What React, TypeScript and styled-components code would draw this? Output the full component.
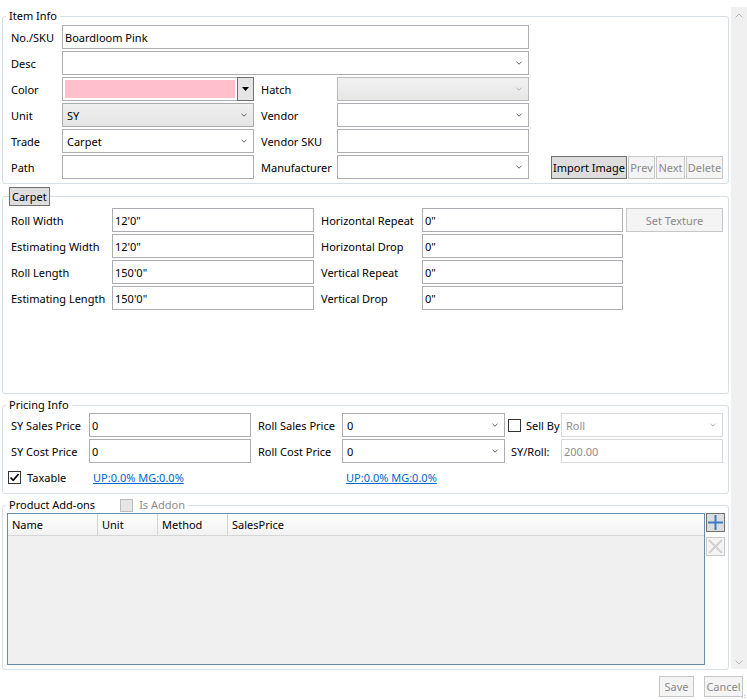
import React from 'react'
import styled, { createGlobalStyle, css } from 'styled-components'

const GlobalStyle = createGlobalStyle`
  * { box-sizing: border-box; }
  html, body { margin: 0; padding: 0; background: #fff; }
  body {
    font-family: "Noto Sans", "Liberation Sans", sans-serif;
    font-size: 11px;
    color: #000;
  }
`

const Window = styled.div`
  position: relative;
  width: 747px;
  height: 700px;
  display: flex;
  flex-direction: column;
  overflow: hidden;
`

const Body = styled.div`
  display: flex;
  height: 670px;
`

const Content = styled.div`
  width: 731px;
  padding: 0 2px;
  display: flex;
  flex-direction: column;
`

const ScrollTrack = styled.div`
  width: 16px;
  height: 662px;
  margin-top: 7px;
  padding: 6px 0 4px;
  background: #f0f0f0;
  display: flex;
  flex-direction: column;
  justify-content: space-between;
  align-items: center;
`

const GroupBox = styled.fieldset<{ $top: number; $pad: string }>`
  margin: ${p => p.$top}px 0 0;
  padding: ${p => p.$pad};
  min-width: 0;
  border: 1px solid #d5dfe5;
  border-radius: 3px;
`

const Legend = styled.legend<{ $offset: number; $pad?: string }>`
  display: flex;
  align-items: center;
  margin-left: ${p => p.$offset}px;
  padding: ${p => p.$pad ?? '0 3px'};
  line-height: 16px;
`

const TabHeader = styled.span`
  display: block;
  height: 19px;
  line-height: 17px;
  padding: 0 2px;
  border: 1px solid #707070;
  background: #dddddd;
`

const FormGrid = styled.div<{ $cols: string }>`
  display: grid;
  grid-template-columns: ${p => p.$cols};
  grid-auto-rows: 24px;
  row-gap: 2px;
`

const FieldLabel = styled.label<{ $indent?: number }>`
  display: flex;
  align-items: center;
  padding-left: ${p => p.$indent ?? 0}px;
  white-space: nowrap;
`

const TextField = styled.input<{ $span?: number; $disabled?: boolean }>`
  grid-column: span ${p => p.$span ?? 1};
  width: 100%;
  height: 24px;
  margin: 0;
  padding: 0 2px;
  font: inherit;
  color: #000;
  background: #fff;
  border: 1px solid #abadb3;
  outline: none;
  ${p =>
    p.$disabled &&
    css`
      color: #8d8d8d;
      border-color: #d9d9d9;
    `}
`

type ComboVariant = 'white' | 'grey' | 'greyDisabled' | 'disabled'

const ComboBox = styled.div<{ $variant?: ComboVariant; $span?: number }>`
  grid-column: span ${p => p.$span ?? 1};
  height: 24px;
  display: flex;
  align-items: center;
  justify-content: space-between;
  padding: 0 6px 0 4px;
  border: 1px solid #abadb3;
  background: #fff;
  color: #000;
  ${p =>
    p.$variant === 'grey' &&
    css`
      border-color: #acacac;
      background: linear-gradient(#f0f0f0, #e5e5e5);
    `}
  ${p =>
    p.$variant === 'greyDisabled' &&
    css`
      border-color: #b9b9b9;
      background: linear-gradient(#f2f2f2, #e6e6e6);
      color: #8d8d8d;
    `}
  ${p =>
    p.$variant === 'disabled' &&
    css`
      border-color: #d9d9d9;
      color: #8d8d8d;
    `}
`

const ChevronMark = styled.svg<{ $light?: boolean }>`
  width: 6px;
  height: 4px;
  flex: none;
  stroke: ${p => (p.$light ? '#b0b0b0' : '#606060')};
`

const Chevron = ({ light }: { light?: boolean }) => (
  <ChevronMark $light={light} viewBox="0 0 6 4" fill="none" strokeWidth="1">
    <path d="M0.5 0.8 L3 3.2 L5.5 0.8" />
  </ChevronMark>
)

const ScrollArrow = styled.svg`
  width: 8px;
  height: 5px;
  stroke: #b4b4b4;
`

const ColorPicker = styled.div`
  display: flex;
  height: 24px;
`

const Swatch = styled.div<{ $color: string }>`
  flex: 1;
  padding: 2px;
  border: 1px solid #abadb3;
  border-right: none;
  &::before {
    content: '';
    display: block;
    height: 100%;
    background: ${p => p.$color};
  }
`

const DropButton = styled.div`
  width: 17px;
  border: 1px solid #707070;
  background: #e5e5e5;
  display: flex;
  align-items: center;
  justify-content: center;
`

const ButtonBar = styled.div`
  display: flex;
  justify-content: flex-end;
  align-items: flex-end;
  gap: 1px;
`

const Button = styled.button<{ $w: number; $h?: number; $active?: boolean }>`
  width: ${p => p.$w}px;
  height: ${p => p.$h ?? 23}px;
  margin: 0;
  padding: 0;
  font: inherit;
  white-space: nowrap;
  border: 1px solid #c7c7c7;
  background: #f4f4f4;
  color: #8a8a8a;
  ${p =>
    p.$active &&
    css`
      border-color: #707070;
      background: #dddddd;
      color: #000;
    `}
`

const CellEnd = styled.div`
  display: flex;
  justify-content: flex-end;
`

const CheckLabel = styled.label<{ $shift?: number; $gap: number; $muted?: boolean }>`
  display: flex;
  align-items: center;
  gap: ${p => p.$gap}px;
  margin-left: ${p => p.$shift ?? 0}px;
  white-space: nowrap;
  color: ${p => (p.$muted ? '#8d8d8d' : '#000')};
`

const CheckBox = styled.span<{ $disabled?: boolean }>`
  width: 13px;
  height: 13px;
  flex: none;
  display: flex;
  align-items: center;
  justify-content: center;
  border: 1px solid ${p => (p.$disabled ? '#bcbcbc' : '#333333')};
  background: ${p => (p.$disabled ? '#e6e6e6' : '#fff')};
`

const LinkCell = styled.div<{ $indent: number }>`
  display: flex;
  align-items: center;
  padding-left: ${p => p.$indent}px;
`

const Link = styled.a`
  color: #0066cc;
  text-decoration: underline;
  cursor: pointer;
`

const AddonsBody = styled.div`
  display: flex;
  gap: 1px;
  height: 152px;
`

const DataGrid = styled.div`
  flex: 1;
  display: flex;
  flex-direction: column;
  border: 1px solid #688caf;
  background: #f0f0f0;
`

const HeaderRow = styled.div`
  display: flex;
  height: 22px;
  background: linear-gradient(#ffffff, #f2f2f2);
  border-bottom: 1px solid #d5d5d5;
`

const HeaderCell = styled.div<{ $w?: number }>`
  display: flex;
  align-items: center;
  padding-left: 4px;
  ${p =>
    p.$w
      ? css`
          width: ${p.$w}px;
          border-right: 1px solid #d5d5d5;
        `
      : css`
          flex: 1;
        `}
`

const SideButtons = styled.div`
  display: flex;
  flex-direction: column;
  gap: 5px;
`

const IconButton = styled.button<{ $active?: boolean }>`
  width: 19px;
  height: 19px;
  margin: 0;
  padding: 0;
  display: flex;
  align-items: center;
  justify-content: center;
  border: 1px solid ${p => (p.$active ? '#707070' : '#c7c7c7')};
  background: ${p => (p.$active ? '#dddddd' : '#f4f4f4')};
`

const Footer = styled.div`
  display: flex;
  justify-content: flex-end;
  align-items: flex-start;
  gap: 10px;
  height: 30px;
  padding: 6px 4px 0 0;
`

const Grip = styled.svg`
  position: absolute;
  right: 1px;
  bottom: 1px;
  width: 4px;
  height: 4px;
  fill: #b8b8b8;
`

const CheckMark = () => (
  <svg width="11" height="11" viewBox="0 0 11 11" fill="none" stroke="#000" strokeWidth="1.7">
    <path d="M1.5 5.5 L4.2 8.3 L9.6 2" />
  </svg>
)

export default function App() {
  return (
    <Window>
      <GlobalStyle />
      <Body>
        <Content>
          <GroupBox $top={8} $pad="1px 5px 4px 8px">
            <Legend $offset={-5}>Item Info</Legend>
            <FormGrid $cols="51px 192px 83px 192px 1fr">
              <FieldLabel>No./SKU</FieldLabel>
              <TextField $span={3} defaultValue="Boardloom Pink" />
              <span />

              <FieldLabel>Desc</FieldLabel>
              <ComboBox $span={3}>
                <span />
                <Chevron />
              </ComboBox>
              <span />

              <FieldLabel>Color</FieldLabel>
              <ColorPicker>
                <Swatch $color="#ffc0cb" />
                <DropButton>
                  <svg width="7" height="4" viewBox="0 0 7 4">
                    <path d="M0 0 H7 L3.5 4 Z" fill="#000" />
                  </svg>
                </DropButton>
              </ColorPicker>
              <FieldLabel $indent={7}>Hatch</FieldLabel>
              <ComboBox $variant="greyDisabled">
                <span />
                <Chevron light />
              </ComboBox>
              <span />

              <FieldLabel>Unit</FieldLabel>
              <ComboBox $variant="grey">
                <span>SY</span>
                <Chevron />
              </ComboBox>
              <FieldLabel $indent={7}>Vendor</FieldLabel>
              <ComboBox>
                <span />
                <Chevron />
              </ComboBox>
              <span />

              <FieldLabel>Trade</FieldLabel>
              <ComboBox>
                <span>Carpet</span>
                <Chevron />
              </ComboBox>
              <FieldLabel $indent={7}>Vendor SKU</FieldLabel>
              <TextField />
              <span />

              <FieldLabel>Path</FieldLabel>
              <TextField />
              <FieldLabel $indent={7}>Manufacturer</FieldLabel>
              <ComboBox>
                <span />
                <Chevron />
              </ComboBox>
              <ButtonBar>
                <Button $w={76} $active>
                  Import Image
                </Button>
                <Button $w={27} disabled>
                  Prev
                </Button>
                <Button $w={29} disabled>
                  Next
                </Button>
                <Button $w={37} disabled>
                  Delete
                </Button>
              </ButtonBar>
            </FormGrid>
          </GroupBox>

          <GroupBox $top={3} $pad="2px 5px 83px 8px">
            <Legend $offset={-2} $pad="0">
              <TabHeader>Carpet</TabHeader>
            </Legend>
            <FormGrid $cols="101px 202px 108px 201px 1fr">
              <FieldLabel>Roll Width</FieldLabel>
              <TextField defaultValue={`12'0"`} />
              <FieldLabel $indent={7}>Horizontal Repeat</FieldLabel>
              <TextField defaultValue={`0"`} />
              <CellEnd>
                <Button $w={97} $h={24} disabled>
                  Set Texture
                </Button>
              </CellEnd>

              <FieldLabel>Estimating Width</FieldLabel>
              <TextField defaultValue={`12'0"`} />
              <FieldLabel $indent={7}>Horizontal Drop</FieldLabel>
              <TextField defaultValue={`0"`} />
              <span />

              <FieldLabel>Roll Length</FieldLabel>
              <TextField defaultValue={`150'0"`} />
              <FieldLabel $indent={7}>Vertical Repeat</FieldLabel>
              <TextField defaultValue={`0"`} />
              <span />

              <FieldLabel>Estimating Length</FieldLabel>
              <TextField defaultValue={`150'0"`} />
              <FieldLabel $indent={7}>Vertical Drop</FieldLabel>
              <TextField defaultValue={`0"`} />
              <span />
            </FormGrid>
          </GroupBox>

          <GroupBox $top={3} $pad="0 5px 4px 8px">
            <Legend $offset={-5}>Pricing Info</Legend>
            <FormGrid $cols="78px 162px 91px 163px 56px 162px">
              <FieldLabel>SY Sales Price</FieldLabel>
              <TextField defaultValue="0" />
              <FieldLabel $indent={7}>Roll Sales Price</FieldLabel>
              <ComboBox>
                <span>0</span>
                <Chevron />
              </ComboBox>
              <CheckLabel $shift={3} $gap={5}>
                <CheckBox />
                Sell By
              </CheckLabel>
              <ComboBox $variant="disabled">
                <span>Roll</span>
                <Chevron light />
              </ComboBox>

              <FieldLabel>SY Cost Price</FieldLabel>
              <TextField defaultValue="0" />
              <FieldLabel $indent={7}>Roll Cost Price</FieldLabel>
              <ComboBox>
                <span>0</span>
                <Chevron />
              </ComboBox>
              <FieldLabel $indent={6}>SY/Roll:</FieldLabel>
              <TextField $disabled defaultValue="200.00" />

              <CheckLabel $shift={-3} $gap={6}>
                <CheckBox>
                  <CheckMark />
                </CheckBox>
                Taxable
              </CheckLabel>
              <LinkCell $indent={4}>
                <Link>UP:0.0% MG:0.0%</Link>
              </LinkCell>
              <span />
              <LinkCell $indent={4}>
                <Link>UP:0.0% MG:0.0%</Link>
              </LinkCell>
            </FormGrid>
          </GroupBox>

          <GroupBox $top={3} $pad="0 3px 4px 4px">
            <Legend $offset={-1}>
              Product Add-ons
              <CheckLabel $shift={25} $gap={6} $muted>
                <CheckBox $disabled />
                Is Addon
              </CheckLabel>
            </Legend>
            <AddonsBody>
              <DataGrid>
                <HeaderRow>
                  <HeaderCell $w={90}>Name</HeaderCell>
                  <HeaderCell $w={60}>Unit</HeaderCell>
                  <HeaderCell $w={70}>Method</HeaderCell>
                  <HeaderCell>SalesPrice</HeaderCell>
                </HeaderRow>
              </DataGrid>
              <SideButtons>
                <IconButton $active>
                  <svg width="15" height="15" viewBox="0 0 15 15" stroke="#3b7cc6" strokeWidth="2">
                    <path d="M7.5 0 V15 M0 7.5 H15" />
                  </svg>
                </IconButton>
                <IconButton disabled>
                  <svg width="15" height="15" viewBox="0 0 15 15" stroke="#cfcfcf" strokeWidth="2">
                    <path d="M1 1 L14 14 M14 1 L1 14" />
                  </svg>
                </IconButton>
              </SideButtons>
            </AddonsBody>
          </GroupBox>
        </Content>
        <ScrollTrack>
          <ScrollArrow viewBox="0 0 8 5" fill="none">
            <path d="M0.5 4.5 L4 1 L7.5 4.5" />
          </ScrollArrow>
          <ScrollArrow viewBox="0 0 8 5" fill="none">
            <path d="M0.5 0.5 L4 4 L7.5 0.5" />
          </ScrollArrow>
        </ScrollTrack>
      </Body>
      <Footer>
        <Button $w={35} $h={21} disabled>
          Save
        </Button>
        <Button $w={39} $h={21} disabled>
          Cancel
        </Button>
      </Footer>
      <Grip viewBox="0 0 4 4">
        <rect x="2" y="2" width="1" height="1" />
        <rect x="0" y="2" width="1" height="1" />
        <rect x="2" y="0" width="1" height="1" />
      </Grip>
    </Window>
  )
}
